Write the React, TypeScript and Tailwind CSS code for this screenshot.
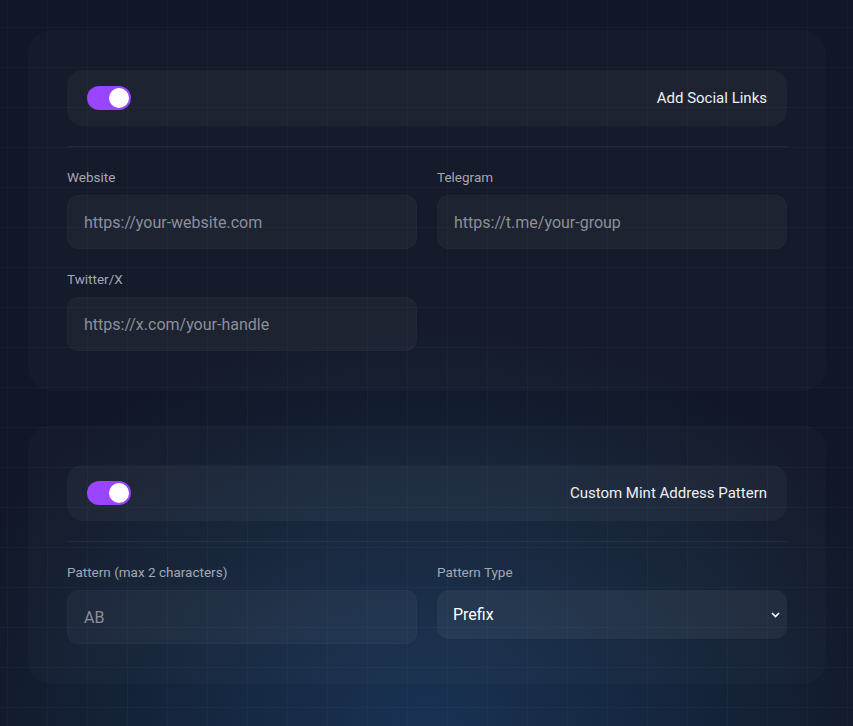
import { useState } from "react";

function Toggle({ on, onChange }: { on: boolean; onChange: () => void }) {
  return (
    <button
      type="button"
      onClick={onChange}
      className={`relative w-11 h-6 rounded-full transition-colors ${on ? "bg-[#9945ff]" : "bg-white/10"}`}
    >
      <span
        className={`absolute top-0.5 w-5 h-5 rounded-full bg-white transition-all ${on ? "left-[22px]" : "left-0.5"}`}
      />
    </button>
  );
}

function Field({ label, placeholder }: { label: string; placeholder: string }) {
  return (
    <label className="flex flex-col gap-2">
      <span className="text-[13.5px] leading-5 text-[#a3a8b3]">{label}</span>
      <input
        placeholder={placeholder}
        className="h-[54px] px-4 rounded-xl bg-white/[0.035] border border-white/[0.025] text-base text-white placeholder:text-[#8b909a] outline-none focus:border-[#9945ff]/60"
      />
    </label>
  );
}

function Section({
  title,
  on,
  onToggle,
  children,
}: {
  title: string;
  on: boolean;
  onToggle: () => void;
  children: React.ReactNode;
}) {
  return (
    <div className="rounded-3xl bg-white/[0.02] px-[39px] py-10">
      <div className="flex items-center justify-between h-14 px-5 rounded-2xl bg-white/[0.035]">
        <Toggle on={on} onChange={onToggle} />
        <span className="text-[15px] text-[#eef0f3]">{title}</span>
      </div>
      <div className="h-px bg-white/[0.06] my-5" />
      {children}
    </div>
  );
}

export default function App() {
  const [social, setSocial] = useState(true);
  const [pattern, setPattern] = useState(true);

  return (
    <div className="min-h-screen bg-[#111726] bg-[radial-gradient(ellipse_60%_55%_at_50%_100%,rgba(28,62,102,0.7),transparent)] font-['Roboto','Liberation_Sans',sans-serif]">
      <div className="min-h-screen bg-[linear-gradient(to_right,rgba(255,255,255,0.025)_1px,transparent_1px),linear-gradient(to_bottom,rgba(255,255,255,0.025)_1px,transparent_1px)] bg-[size:40px_40px] bg-[position:7px_27px] pl-7 pr-[27px] pt-[30px] pb-10">
        <div className="flex flex-col gap-[34px]">
          <Section title="Add Social Links" on={social} onToggle={() => setSocial(!social)}>
            <div className="grid grid-cols-2 gap-x-5 gap-y-5">
              <Field label="Website" placeholder="https://your-website.com" />
              <Field label="Telegram" placeholder="https://t.me/your-group" />
              <Field label="Twitter/X" placeholder="https://x.com/your-handle" />
            </div>
          </Section>

          <Section title="Custom Mint Address Pattern" on={pattern} onToggle={() => setPattern(!pattern)}>
            <div className="grid grid-cols-2 gap-x-5 items-start">
              <Field label="Pattern (max 2 characters)" placeholder="AB" />
              <label className="flex flex-col gap-2">
                <span className="text-[13.5px] leading-5 text-[#a3a8b3]">Pattern Type</span>
                <div className="relative">
                  <select className="w-full h-[49px] px-4 rounded-xl bg-white/[0.05] text-base text-white appearance-none outline-none">
                    <option className="bg-[#1a2130]">Prefix</option>
                    <option className="bg-[#1a2130]">Suffix</option>
                  </select>
                  <svg
                    className="absolute right-[7px] top-1/2 -translate-y-1/2 pointer-events-none"
                    width="9"
                    height="6"
                    viewBox="0 0 9 6"
                    fill="none"
                    stroke="white"
                    strokeWidth="1.6"
                  >
                    <path d="M1 1l3.5 3.5L8 1" />
                  </svg>
                </div>
              </label>
            </div>
          </Section>
        </div>
      </div>
    </div>
  );
}
